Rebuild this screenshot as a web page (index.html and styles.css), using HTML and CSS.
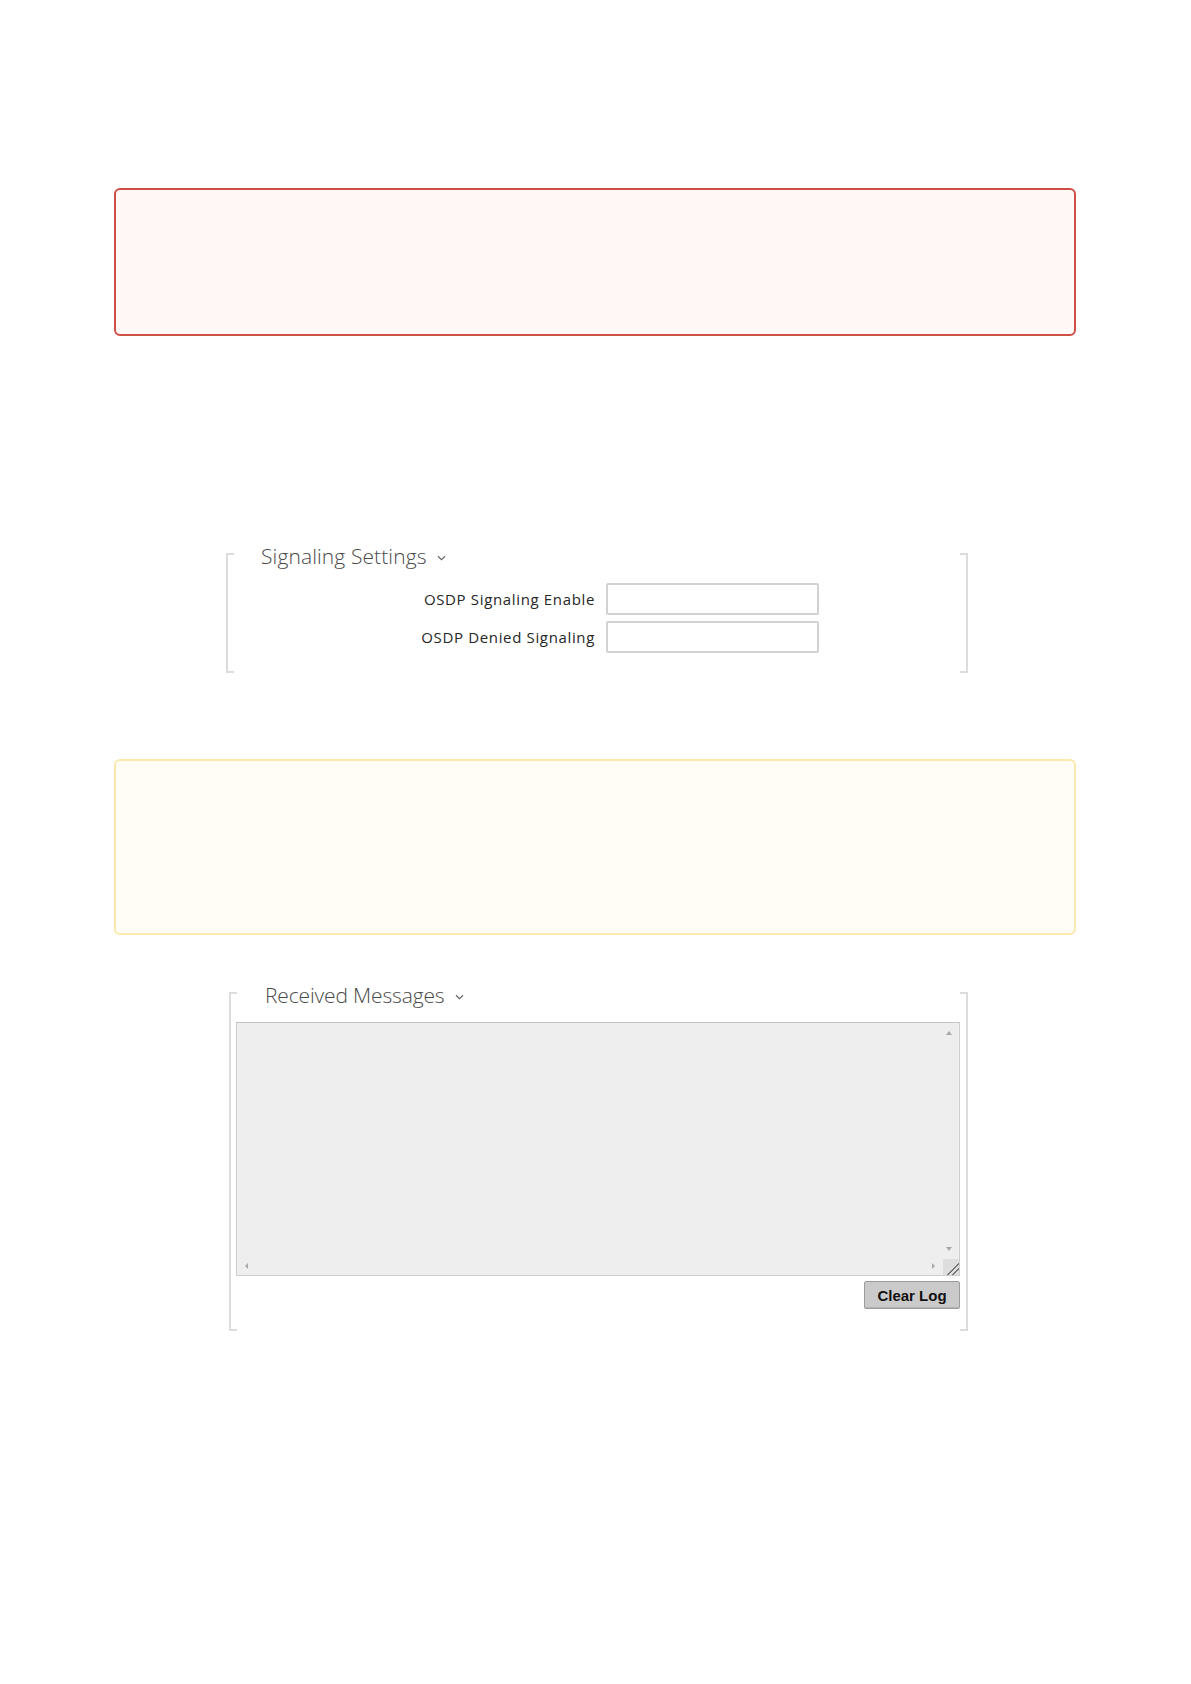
FILE: index.html
```html
<!DOCTYPE html>
<html lang="en">
<head>
  <meta charset="UTF-8">
  <title>OSDP Settings</title>
  <link rel="stylesheet" href="styles.css">
</head>
<body>
  <div class="page">
    <div class="alert alert-error"></div>

    <div class="group group-signaling">
      <div class="group-title">Signaling Settings
        <svg class="chevron" width="9" height="6" viewBox="0 0 9 6"><path d="M1 1.2 L4.5 4.6 L8 1.2" fill="none" stroke="#666" stroke-width="1.2"/></svg>
      </div>
      <div class="form-grid">
        <label for="sigEnable">OSDP Signaling Enable</label>
        <input type="text" id="sigEnable">
        <label for="sigDenied">OSDP Denied Signaling</label>
        <input type="text" id="sigDenied">
      </div>
    </div>

    <div class="alert alert-warning"></div>

    <div class="group group-messages">
      <div class="group-title">Received Messages
        <svg class="chevron" width="9" height="6" viewBox="0 0 9 6"><path d="M1 1.2 L4.5 4.6 L8 1.2" fill="none" stroke="#666" stroke-width="1.2"/></svg>
      </div>
      <div class="log">
        <span class="arrow arrow-up"></span>
        <span class="arrow arrow-down"></span>
        <span class="arrow arrow-left"></span>
        <span class="arrow arrow-right"></span>
        <span class="grip"></span>
      </div>
      <div class="log-actions">
        <button type="button" class="btn">Clear Log</button>
      </div>
    </div>
  </div>
</body>
</html>
```
FILE: styles.css
```css
body {
  margin: 0;
  font-family: "Open Sans", "Noto Sans", sans-serif;
  background-color: #fff;
  color: #222;
}

.page {
  padding-top: 188px;
  padding-bottom: 200px;
}

.alert {
  margin-left: 114px;
  width: 962px;
  box-sizing: border-box;
  border-radius: 6px;
}

.alert-error {
  height: 148px;
  border: 2px solid #cf4f47;
  background-color: #fff8f7;
}

.alert-warning {
  margin-top: 86px;
  height: 176px;
  border: 2px solid #fce9ad;
  background-color: #fffdf6;
}

/* bracketed settings group */
.group {
  position: relative;
  box-sizing: border-box;
}

.group::before,
.group::after {
  content: "";
  position: absolute;
  top: 11px;
  bottom: 0;
  width: 6px;
  border: 2px solid #dcdcdc;
}

.group::before {
  left: 0;
  border-right: none;
}

.group::after {
  right: 0;
  border-left: none;
}

.group-title {
  font-size: 21px;
  font-weight: 300;
  line-height: 28px;
  color: #4a4a4a;
}

.chevron {
  margin-left: 5px;
  vertical-align: 3px;
}

.group-signaling {
  margin-top: 206px;
  margin-left: 226px;
  width: 742px;
  padding-bottom: 20px;
}

.group-signaling .group-title {
  padding-left: 35px;
  letter-spacing: 0.1px;
}

.form-grid {
  display: grid;
  grid-template-columns: 369px 213px;
  column-gap: 11px;
  row-gap: 6px;
  align-items: center;
  margin-top: 13px;
}

.form-grid label {
  text-align: right;
  font-size: 15px;
  letter-spacing: 0.65px;
  color: #262626;
}

.form-grid input {
  height: 32px;
  box-sizing: border-box;
  border: 2px solid #d2d2d2;
  border-radius: 2px;
  background: #fff;
  margin: 0;
}

.group-messages {
  margin-top: 46px;
  margin-left: 229px;
  width: 739px;
  padding-bottom: 22px;
}

.group-messages .group-title {
  padding-left: 36px;
  letter-spacing: -0.15px;
}

.log {
  position: relative;
  margin-top: 13px;
  margin-left: 7px;
  width: 724px;
  height: 254px;
  box-sizing: border-box;
  border: 1px solid #cfcfcf;
  border-top-color: #c4c4c4;
  background-color: #eeeeee;
}

.arrow {
  position: absolute;
  width: 0;
  height: 0;
  border: 3px solid transparent;
}

.arrow-up {
  right: 7px;
  top: 8px;
  border-bottom: 4px solid #a8a8a8;
  border-top: none;
}

.arrow-down {
  right: 7px;
  bottom: 24px;
  border-top: 4px solid #a8a8a8;
  border-bottom: none;
}

.arrow-left {
  left: 8px;
  bottom: 6px;
  border-right: 3px solid #a8a8a8;
  border-left: none;
}

.arrow-right {
  right: 24px;
  bottom: 6px;
  border-left: 3px solid #a8a8a8;
  border-right: none;
}

.grip {
  position: absolute;
  right: 0;
  bottom: 0;
  width: 16px;
  height: 16px;
  background:
    linear-gradient(135deg, transparent 60%, #777 60%, #777 66%, transparent 66%, transparent 78%, #777 78%, #777 84%, transparent 84%),
    #dedede;
}

.log-actions {
  display: flex;
  justify-content: flex-end;
  margin-top: 5px;
  padding-right: 8px;
}

.btn {
  width: 96px;
  height: 28px;
  padding: 0;
  font-family: "Liberation Sans", Arial, sans-serif;
  font-size: 15px;
  font-weight: bold;
  color: #111;
  background-color: #cacaca;
  border: 1px solid #9c9c9c;
  border-radius: 2px;
  box-shadow: inset 0 -1px 0 #b4b4b4;
  cursor: pointer;
}
```
